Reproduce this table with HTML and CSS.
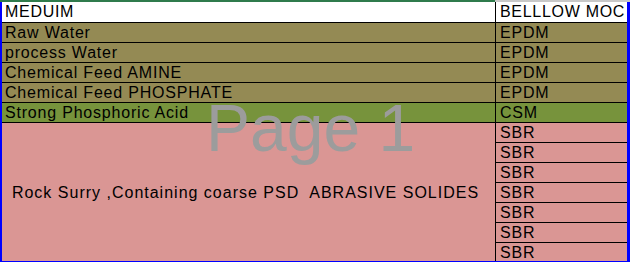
FILE: index.html
```html
<!DOCTYPE html>
<html>
<head>
<meta charset="utf-8">
<link rel="stylesheet" href="styles.css">
</head>
<body>
<div class="page">
  <div class="topbar"><div class="topbar-sel"></div><div class="topbar-rest"></div></div>
  <div class="sheet">
    <div class="cell head left">MEDUIM</div>
    <div class="cell head right">BELLLOW MOC</div>

    <div class="cell olive left">Raw Water</div>
    <div class="cell olive right">EPDM</div>
    <div class="cell olive left">process Water</div>
    <div class="cell olive right">EPDM</div>
    <div class="cell olive left">Chemical Feed AMINE</div>
    <div class="cell olive right">EPDM</div>
    <div class="cell olive left">Chemical Feed PHOSPHATE</div>
    <div class="cell olive right">EPDM</div>
    <div class="cell green left">Strong Phosphoric Acid</div>
    <div class="cell green right">CSM</div>

    <div class="cell pink left merged">Rock Surry ,Containing coarse PSD  ABRASIVE SOLIDES</div>
    <div class="cell pink right">SBR</div>
    <div class="cell pink right">SBR</div>
    <div class="cell pink right">SBR</div>
    <div class="cell pink right">SBR</div>
    <div class="cell pink right">SBR</div>
    <div class="cell pink right">SBR</div>
    <div class="cell pink right last">SBR</div>
  </div>
  <div class="watermark">Page 1</div>
</div>
</body>
</html>
```

FILE: styles.css
```css
html, body {
  margin: 0;
  padding: 0;
  background: #ffffff;
}
.page {
  position: relative;
  width: 630px;
  height: 262px;
  overflow: hidden;
  font-family: "Liberation Sans", Arial, sans-serif;
  font-size: 16px;
  color: #000;
}
.topbar {
  display: flex;
  height: 2px;
}
.topbar-sel {
  width: 495px;
  background: #2f7b4c;
}
.topbar-rest {
  flex: 1;
  background: #c8c8c8;
}
.sheet {
  display: grid;
  grid-template-columns: 494px 1fr;
  grid-template-rows: 21px repeat(5, 20px) repeat(6, 20px) 18px;
  border-left: 2px solid #0000ff;
  border-right: 3px solid #0000ff;
  border-bottom: 1px solid #0000ff;
}
.cell {
  box-sizing: border-box;
  border-bottom: 1px solid #000;
  padding-left: 3px;
  line-height: 19px;
  letter-spacing: 0.8px;
  white-space: pre;
  overflow: hidden;
}
.left {
  border-right: 1px solid #000;
}
.right {
  padding-left: 4px;
}
.head {
  background: #ffffff;
  line-height: 20px;
  letter-spacing: 0.7px;
}
.olive { background: #948a54; }
.green { background: #77933c; }
.pink { background: #da9694; }
.merged {
  grid-row: span 7;
  border-bottom: none;
  display: flex;
  align-items: center;
  justify-content: center;
  letter-spacing: 1px;
  padding-left: 0;
  padding-right: 6px;
}
.last {
  border-bottom: none;
}
.watermark {
  position: absolute;
  left: 206px;
  top: 95px;
  font-size: 66px;
  line-height: 66px;
  color: #9c9c9c;
  letter-spacing: 0;
}
```
